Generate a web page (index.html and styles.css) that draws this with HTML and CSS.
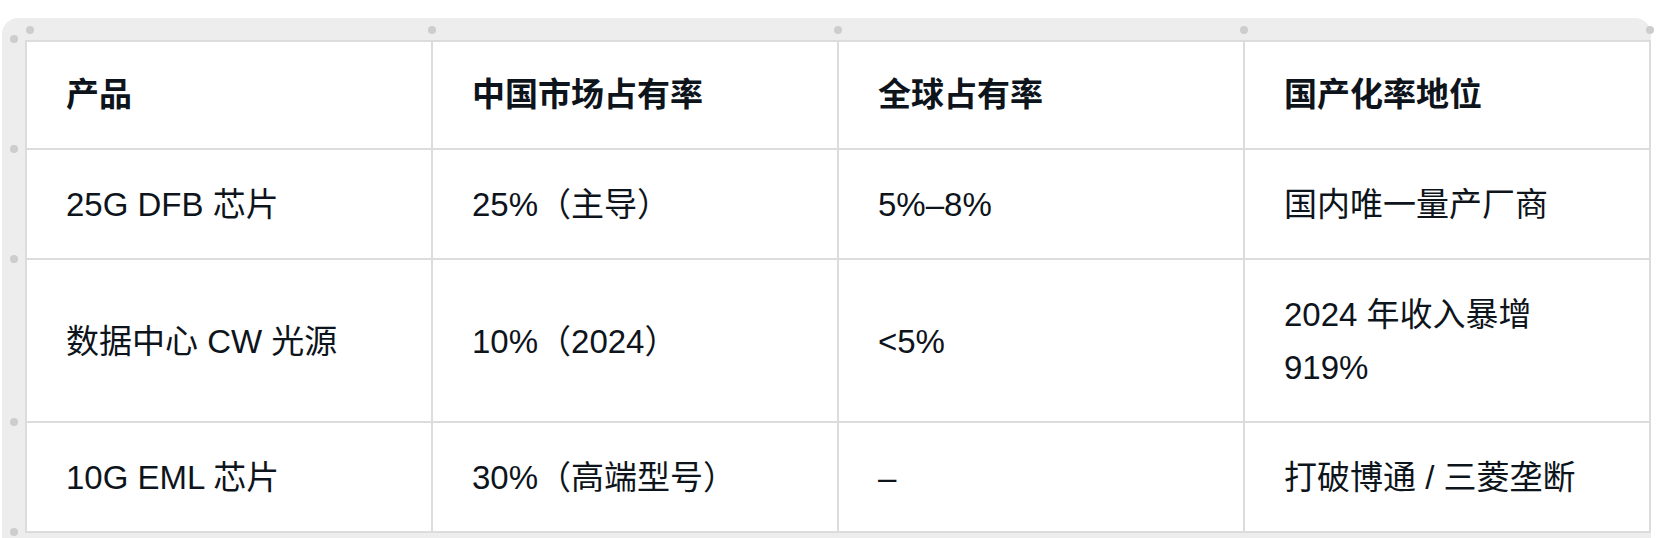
FILE: index.html
```html
<!DOCTYPE html>
<html lang="zh-CN">
<head>
<meta charset="utf-8">
<title>市场占有率</title>
<link rel="stylesheet" href="styles.css">
</head>
<body>
<div class="page">
  <div class="frame">
    <table class="grid">
      <colgroup><col><col><col><col></colgroup>
      <thead>
        <tr>
          <th><span class="col-handle first"></span><span class="row-handle first"></span>产品</th>
          <th><span class="col-handle"></span>中国市场占有率</th>
          <th><span class="col-handle"></span>全球占有率</th>
          <th><span class="col-handle"></span><span class="col-handle end"></span>国产化率地位</th>
        </tr>
      </thead>
      <tbody>
        <tr>
          <td><span class="row-handle"></span>25G DFB 芯片</td>
          <td>25%（主导）</td>
          <td>5%–8%</td>
          <td>国内唯一量产厂商</td>
        </tr>
        <tr>
          <td><span class="row-handle"></span>数据中心 CW 光源</td>
          <td>10%（2024）</td>
          <td>&lt;5%</td>
          <td>2024 年收入暴增<br>919%</td>
        </tr>
        <tr>
          <td><span class="row-handle"></span><span class="row-handle last"></span>10G EML 芯片</td>
          <td>30%（高端型号）</td>
          <td>–</td>
          <td>打破博通 / 三菱垄断</td>
        </tr>
      </tbody>
    </table>
  </div>
</div>
</body>
</html>
```

FILE: styles.css
```css
html, body {
  margin: 0;
  padding: 0;
  background: #ffffff;
}

.page {
  padding: 18px 19px 0 2px;
}

.frame {
  background: #ededed;
  border-radius: 16px 16px 0 0;
  padding: 22px 0 24px 23px;
}

.grid {
  width: 100%;
  table-layout: fixed;
  border-collapse: collapse;
  background: #ffffff;
  font-family: "Liberation Sans", "Noto Sans CJK SC", sans-serif;
  font-size: 33px;
  color: #0e141b;
}

.grid th,
.grid td {
  position: relative;
  border: 2px solid #dcdcdc;
  text-align: left;
  vertical-align: middle;
  line-height: 53px;
}

.grid th {
  font-weight: 700;
  padding: 26px 40px 27px 39px;
}

.grid td {
  font-weight: 400;
  padding: 28px 40px 27px 39px;
}

.col-handle,
.row-handle {
  position: absolute;
  width: 8px;
  height: 8px;
  border-radius: 50%;
  background: #cdcdcd;
}

.col-handle {
  top: -16px;
  left: -5px;
}

.col-handle.first {
  left: -1px;
}

.col-handle.end {
  left: auto;
  right: -5px;
}

.row-handle {
  left: -17px;
  top: -5px;
}

.row-handle.first {
  top: -7px;
}

.row-handle.last {
  top: auto;
  bottom: -5px;
}
```
